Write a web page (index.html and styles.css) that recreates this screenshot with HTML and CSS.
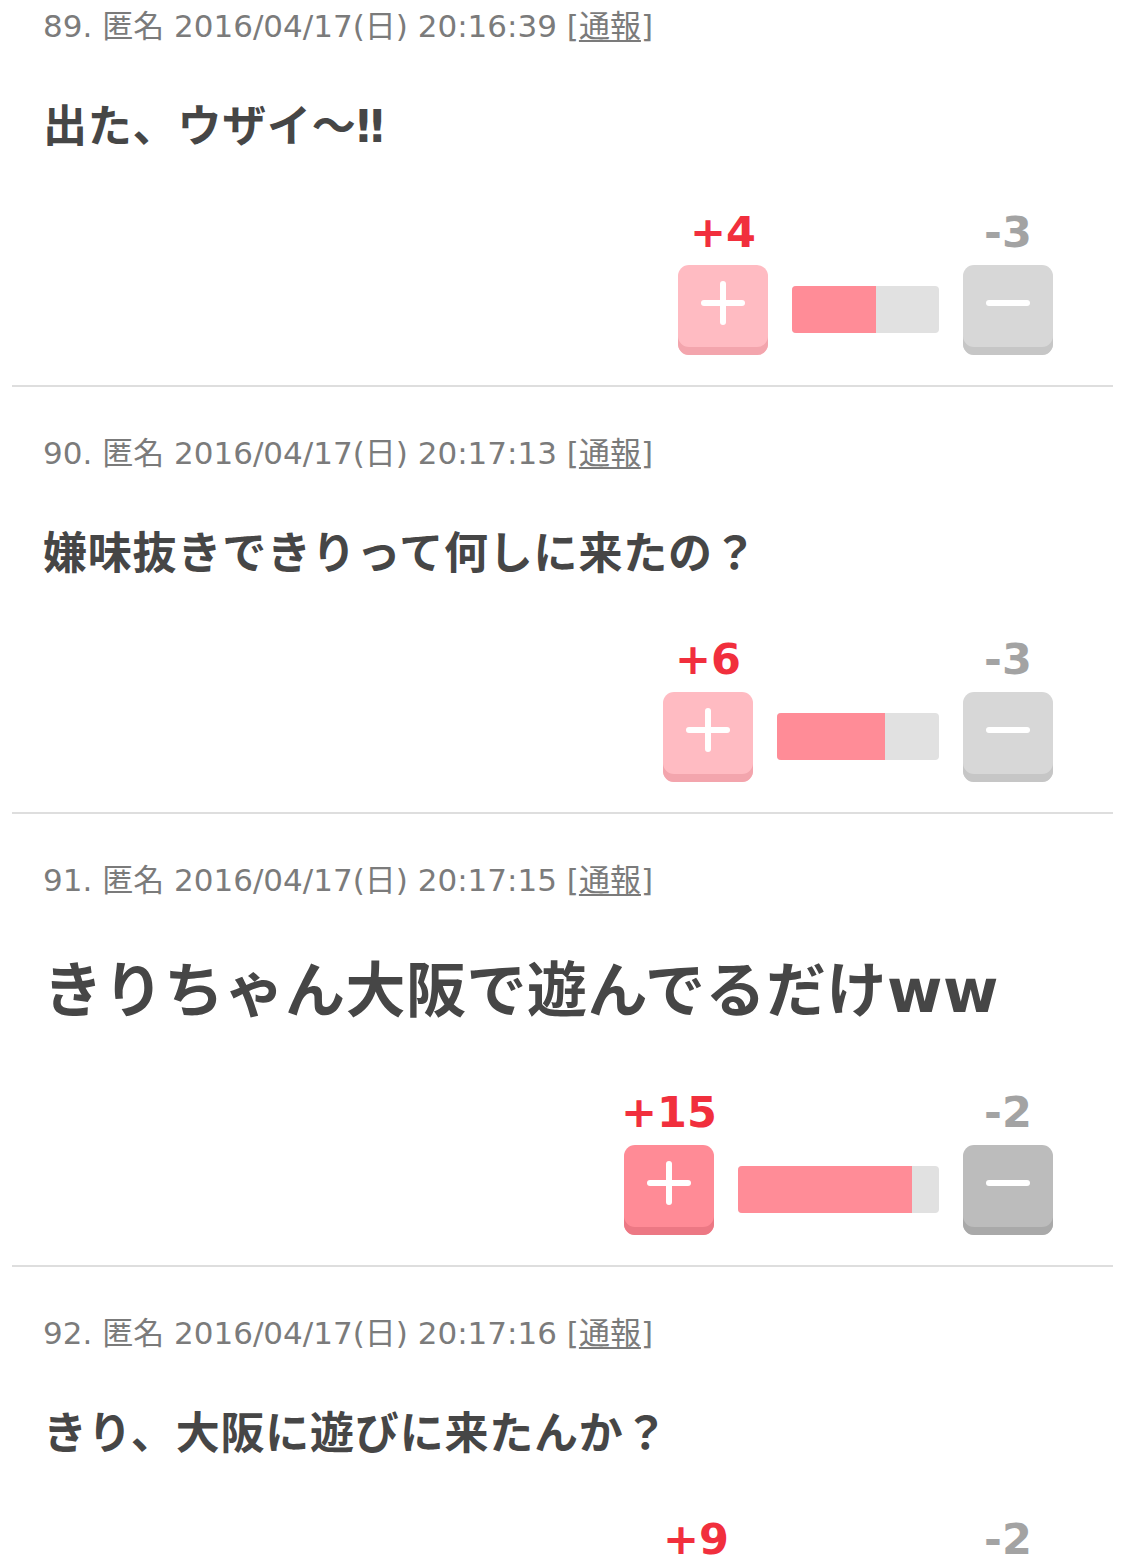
FILE: index.html
```html
<!DOCTYPE html>
<html lang="ja">
<head>
<meta charset="UTF-8" />
<meta name="viewport" content="width=device-width, initial-scale=1" />
<title>コメント</title>
<link rel="stylesheet" href="styles.css">
</head>
<body>

<div id="comentarios">

  <div class="comment">
    <div class="comment-head">89. 匿名 2016/04/17(日) 20:16:39 [<a href="#">通報</a>]</div>
    <div class="comment-body">出た、ウザイ〜‼</div>
    <div class="vote">
      <div class="vote-col">
        <div class="count plus">+4</div>
        <button class="btn btn-plus lv1" type="button" aria-label="プラス"></button>
      </div>
      <div class="bar" style="width:147px"><span style="width:57%"></span></div>
      <div class="vote-col">
        <div class="count minus">-3</div>
        <button class="btn btn-minus lv1" type="button" aria-label="マイナス"></button>
      </div>
    </div>
  </div>

  <div class="comment">
    <div class="comment-head">90. 匿名 2016/04/17(日) 20:17:13 [<a href="#">通報</a>]</div>
    <div class="comment-body">嫌味抜きできりって何しに来たの？</div>
    <div class="vote">
      <div class="vote-col">
        <div class="count plus">+6</div>
        <button class="btn btn-plus lv1" type="button" aria-label="プラス"></button>
      </div>
      <div class="bar" style="width:162px"><span style="width:66.7%"></span></div>
      <div class="vote-col">
        <div class="count minus">-3</div>
        <button class="btn btn-minus lv1" type="button" aria-label="マイナス"></button>
      </div>
    </div>
  </div>

  <div class="comment">
    <div class="comment-head">91. 匿名 2016/04/17(日) 20:17:15 [<a href="#">通報</a>]</div>
    <div class="comment-body big">きりちゃん大阪で遊んでるだけww</div>
    <div class="vote">
      <div class="vote-col">
        <div class="count plus">+15</div>
        <button class="btn btn-plus lv2" type="button" aria-label="プラス"></button>
      </div>
      <div class="bar" style="width:201px"><span style="width:86.5%"></span></div>
      <div class="vote-col">
        <div class="count minus">-2</div>
        <button class="btn btn-minus lv2" type="button" aria-label="マイナス"></button>
      </div>
    </div>
  </div>

  <div class="comment">
    <div class="comment-head">92. 匿名 2016/04/17(日) 20:17:16 [<a href="#">通報</a>]</div>
    <div class="comment-body">きり、大阪に遊びに来たんか？</div>
    <div class="vote">
      <div class="vote-col">
        <div class="count plus">+9</div>
        <button class="btn btn-plus lv1" type="button" aria-label="プラス"></button>
      </div>
      <div class="bar" style="width:174px"><span style="width:81.8%"></span></div>
      <div class="vote-col">
        <div class="count minus">-2</div>
        <button class="btn btn-minus lv1" type="button" aria-label="マイナス"></button>
      </div>
    </div>
  </div>

</div>

</body>
</html>
```

FILE: styles.css
```css
body {
  margin: 0;
  background: #fff;
  font-family: "DejaVu Sans", "Noto Sans CJK JP", sans-serif;
  overflow: hidden;
}

/* lista de comentarios (desplazada, como al hacer scroll) */
#comentarios {
  margin: -40px 12px 0;
}

.comment {
  padding: 46px 60px 30px 31px;
  border-bottom: 2px solid #dedede;
}

.comment-head {
  font-size: 31px;
  line-height: 40px;
  color: #7b7b7b;
  white-space: nowrap;
}
.comment-head a {
  color: #7b7b7b;
  text-decoration: underline;
  text-underline-offset: 3px;
  text-decoration-thickness: 1.5px;
}

.comment-body {
  margin-top: 51px;
  font-size: 44px;
  line-height: 60px;
  font-weight: 700;
  letter-spacing: 0.8px;
  color: #464646;
}
.comment-body.big {
  margin-top: 48px;
  font-size: 60px;
  line-height: 86px;
  letter-spacing: 0.5px;
}

/* VOTOS */
.vote {
  margin-top: 51px;
  display: flex;
  justify-content: flex-end;
  align-items: flex-start;
  gap: 24px;
}
.comment-body.big + .vote {
  margin-top: 54px;
}
.vote-col {
  width: 90px;
  display: flex;
  flex-direction: column;
  align-items: center;
}
.count {
  font-weight: 700;
  font-size: 43px;
  line-height: 48px;
  margin-bottom: 9px;
  white-space: nowrap;
}
.count.plus { color: #f12f3d; }
.count.minus { color: #a3a3a3; }

.btn {
  position: relative;
  width: 90px;
  height: 90px;
  padding: 0;
  border: none;
  border-radius: 11px;
  cursor: pointer;
}
.btn::before,
.btn::after {
  content: "";
  position: absolute;
  background: #fff;
  border-radius: 3px;
}
.btn::before {
  left: 23px;
  top: 35px;
  width: 44px;
  height: 6px;
}
.btn-plus::after {
  left: 42px;
  top: 16px;
  width: 6px;
  height: 44px;
}

.btn-plus.lv1 {
  background: #ffbbc2;
  box-shadow: inset 0 -8px 0 #f3a5ad;
}
.btn-plus.lv2 {
  background: #ff8b96;
  box-shadow: inset 0 -8px 0 #ec7884;
}
.btn-minus.lv1 {
  background: #d7d7d7;
  box-shadow: inset 0 -8px 0 #c6c6c6;
}
.btn-minus.lv2 {
  background: #bcbcbc;
  box-shadow: inset 0 -8px 0 #a9a9a9;
}

.bar {
  margin-top: 78px;
  height: 47px;
  background: #e1e1e1;
  border-radius: 4px;
  overflow: hidden;
  flex-shrink: 0;
}
.bar span {
  display: block;
  height: 100%;
  background: #ff8c97;
}
```
